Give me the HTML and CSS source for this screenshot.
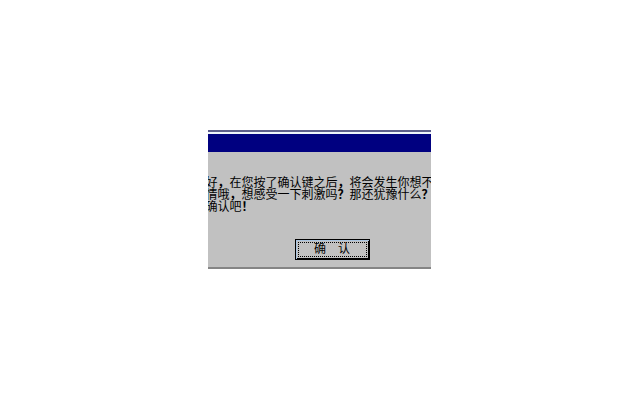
FILE: index.html
```
<!DOCTYPE html>
<html lang="zh-CN">
<head>
    <meta charset="UTF-8">
    <title>确认</title>
    <link rel="stylesheet" href="styles.css">
</head>
<body>
    <div class="dialog">
        <div class="title-bar"></div>
        <div class="dialog-body">
            <p class="message">好<b>，</b>在您按了确认键之后<b>，</b>将会发生你想不<br>情哦<b>，</b>想感受一下刺激吗<b>？</b>那还犹豫什么<b>？</b><br>确认吧<b>！</b></p>
            <button class="ok-button" type="button"><span class="focus-ring">确　认</span></button>
        </div>
    </div>
</body>
</html>
```

FILE: styles.css
```
body {
    display: flex;
    justify-content: center;
    align-items: center;
    box-sizing: border-box;
    min-height: 100vh;
    margin: 0;
    padding: 0 2px 2px 0;
    background-color: #fff;
    font-family: "Liberation Sans", "Noto Sans CJK SC", sans-serif;
    font-size: 12px;
    line-height: 12px;
    color: #000;
}

.dialog {
    width: 223px;
    max-width: 100%;
    overflow: hidden;
    background-color: #c1c1c1;
    border-top: 2px solid #5d5e8b;
    border-bottom: 2px solid #858585;
}

.title-bar {
    height: 18px;
    border-top: 2px solid #eef4fb;
    background-color: #000080;
}

.dialog-body {
    display: flex;
    flex-direction: column;
    align-items: center;
    padding: 25px 0 7px 26px;
}

/* the message runs past both edges of the window */
.message {
    align-self: flex-start;
    margin: 0 0 26px -28px;
    white-space: nowrap;
}

.ok-button {
    box-sizing: border-box;
    width: 75px;
    height: 21px;
    padding: 1px;
    border: 1px solid #000;
    background-color: #c1c1c1;
    box-shadow: inset 1px 1px 0 #a9c4e0, inset -1px -1px 0 #000;
    font: inherit;
    color: inherit;
}

.focus-ring {
    display: block;
    margin: 1px;
    border: 1px dotted #000;
    line-height: 13px;
}
```
